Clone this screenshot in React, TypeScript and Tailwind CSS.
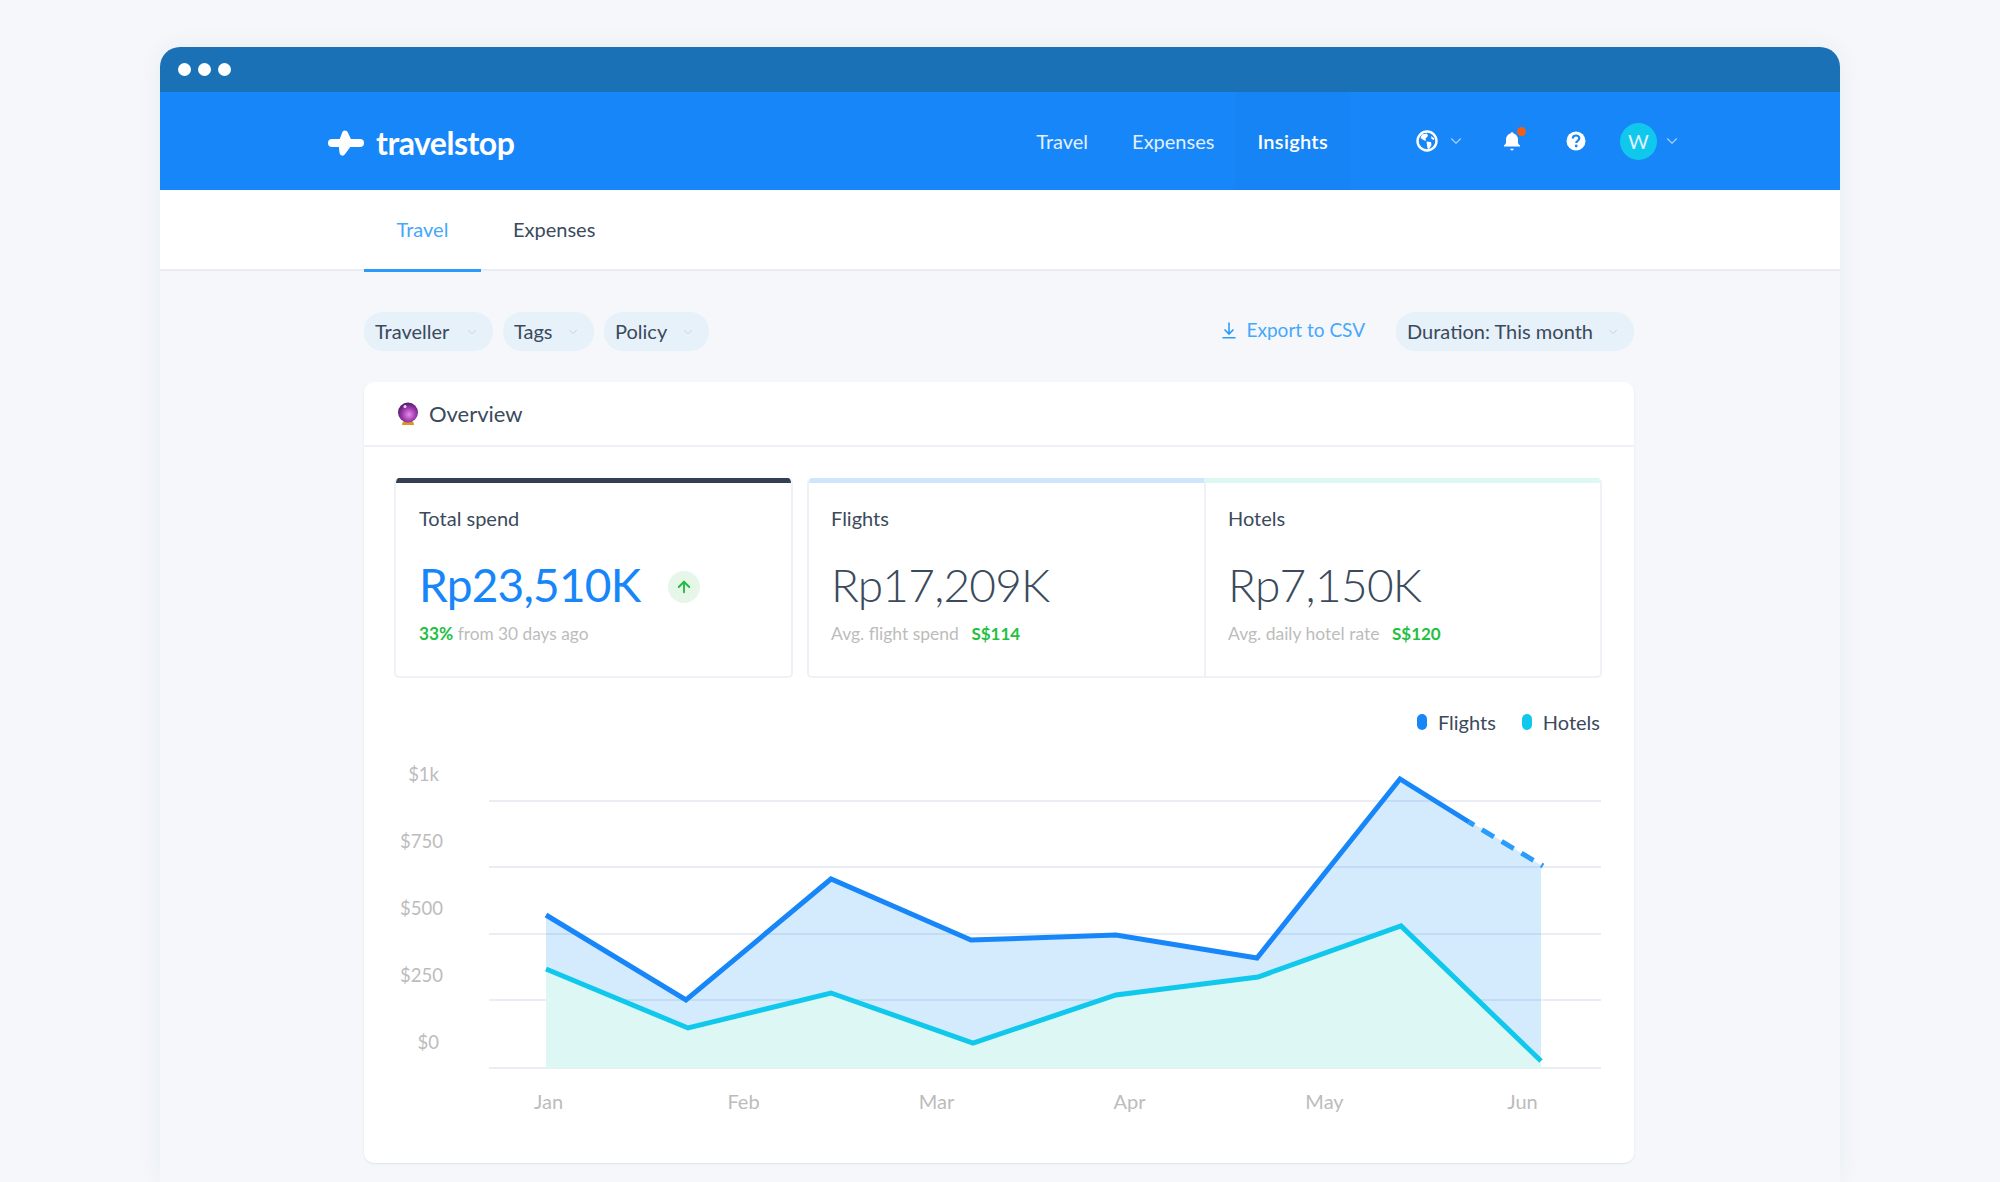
import { ArrowUp, ChevronDown } from "lucide-react";

const yLabels = ["$1k", "$750", "$500", "$250", "$0"];
const months = [
  { name: "Jan", width: 197 },
  { name: "Feb", width: 193 },
  { name: "Mar", width: 193 },
  { name: "Apr", width: 193 },
  { name: "May", width: 197 },
  { name: "Jun", width: 199 },
];

function FilterPill({ label, className }: { label: string; className: string }) {
  return (
    <div className={`flex h-[39px] items-center justify-between rounded-[19px] bg-[#e6f1fa] pl-[11px] pr-[14px] text-[20px] text-[#3b4a5c] ${className}`}>
      <span className="mb-[2px]">{label}</span>
      <ChevronDown size={14} strokeWidth={1.5} className="text-[#c3ced8]" />
    </div>
  );
}

function PlaneLogo() {
  return (
    <svg width="36" height="30" viewBox="0 0 36 30" fill="white" stroke="white" strokeLinecap="round" strokeLinejoin="round" className="mt-[3px]">
      <path d="M4 15H32" strokeWidth="8" />
      <path d="M17 5.500 21.500 15 14.500 24.500 13.500 15Z" strokeWidth="6" />
    </svg>
  );
}

function GlobeIcon() {
  return (
    <svg width="22" height="22" viewBox="0 0 22 22">
      <circle cx="11" cy="11" r="9.500" fill="none" stroke="white" strokeWidth="2.400" />
      <path d="M6 4.500 11 3.500 12 6 9.500 8.500 10 11 7.500 10 4.500 8Z" fill="white" />
      <path d="M10.500 11.500 15 12 15.500 15 13 19 11.500 18.500 11 15Z" fill="white" />
      <path d="M15 6 18.500 8.500 18 10 15.500 9Z" fill="white" />
    </svg>
  );
}

function BellIcon() {
  return (
    <div className="relative h-[22px] w-[22px]">
      <svg width="22" height="22" viewBox="0 0 22 22" fill="white">
        <path d="M10 2.200a1.300 1.300 0 0 1 1.500 1.200c2.900.7 4.500 3 4.500 6v3.200c0 1 .8 2 2 3v1H2v-1c1.200-1 2-2 2-3V9.400c0-3 1.600-5.300 4.500-6a1.400 1.400 0 0 1 1.500-1.200Z" />
        <path d="M8.200 18.800h3.600a1.800 1.800 0 0 1-3.600 0Z" />
      </svg>
      <span className="absolute right-[-2px] top-[-3px] h-[9px] w-[9px] rounded-full bg-[#ef5f17]" />
    </div>
  );
}

function HelpIcon() {
  return (
    <svg width="20" height="20" viewBox="0 0 20 20">
      <circle cx="10" cy="10" r="9.500" fill="white" />
      <path d="M6.800 7.600c0-2 1.500-3.100 3.300-3.100s3.200 1.100 3.200 2.800c0 2.500-3.100 2.400-3.100 4.600" fill="none" stroke="#1786f9" strokeWidth="2.200" />
      <circle cx="10.200" cy="15" r="1.400" fill="#1786f9" />
    </svg>
  );
}

function CrystalBall() {
  return (
    <svg width="22" height="24" viewBox="0 0 22 24">
      <defs>
        <radialGradient id="ball" cx="55%" cy="60%" r="60%">
          <stop offset="0%" stopColor="#e58be8" />
          <stop offset="55%" stopColor="#a13bb0" />
          <stop offset="100%" stopColor="#4d1a63" />
        </radialGradient>
      </defs>
      <path d="M5 23c0-3 2-5 6-5s6 2 6 5Z" fill="#d99a24" />
      <circle cx="11" cy="10.500" r="10" fill="url(#ball)" />
      <circle cx="8" cy="4.500" r="1.500" fill="#f2d6f5" />
    </svg>
  );
}

function DownloadIcon() {
  return (
    <svg width="14" height="17" viewBox="0 0 14 17" fill="none" stroke="#2a9dfb" strokeWidth="1.600">
      <path d="M7 0.500V12M2.500 7.500 7 12l4.500-4.500M0.500 15.800h13" />
    </svg>
  );
}

function AreaChart() {
  const blue = "546,915 686,1000 831,879 971,940 1116,935 1257,958 1400,779 1469,822";
  const cyan = "546,969 688,1028 831,993 973,1043 1116,995 1258,977 1401,926 1541,1061";
  return (
    <svg width="1113" height="300" viewBox="489 775 1113 300" className="block" fill="none">
      {[801, 867, 934, 1000, 1068].map((y) => (
        <line key={y} x1="489" x2="1601" y1={y} y2={y} stroke="#eaedf4" strokeWidth="2" />
      ))}
      <polygon points="546,915 686,1000 831,879 971,940 1116,935 1257,958 1400,779 1541,865 1541,1068 546,1068" fill="#2a9dfb" fillOpacity="0.2" />
      <polygon points="546,969 688,1028 831,993 973,1043 1116,995 1258,977 1401,926 1541,1061 1541,1068 546,1068" fill="#ddf8f4" fillOpacity="0.96" />
      <polyline points={blue} stroke="#1786f9" strokeWidth="5" />
      <line x1="1469" y1="822" x2="1543" y2="866" stroke="#2a9dfb" strokeWidth="5" strokeDasharray="6 9 14 9 14 9 14 9 7 20" />
      <polyline points={cyan} stroke="#10c8ec" strokeWidth="5" />
    </svg>
  );
}

export default function App() {
  return (
    <div className="h-[1182px] overflow-hidden bg-[#f5f7fb] px-[160px] pt-[47px] font-[Lato,sans-serif]">
      <div className="h-[1135px] rounded-t-[20px] bg-[#f5f7fb] shadow-[0_0_24px_rgba(40,60,90,0.06)]">
        <div className="flex h-[45px] items-center gap-[7px] rounded-t-[20px] bg-[#1a71b5] pl-[18px]">
          <span className="h-[13px] w-[13px] rounded-full bg-white" />
          <span className="h-[13px] w-[13px] rounded-full bg-white" />
          <span className="h-[13px] w-[13px] rounded-full bg-white" />
        </div>

        <header className="flex h-[98px] items-center bg-[#1786f9] pl-[168px] pr-[160px]">
          <div className="flex items-center gap-[12px]">
            <PlaneLogo />
            <span className="mt-[3px] text-[32px] font-bold leading-none tracking-[-0.5px] text-white">travelstop</span>
          </div>
          <nav className="ml-[522px] flex h-full items-center text-[20px] text-[#e2f0ff]">
            <span className="mr-[44px]">Travel</span>
            <span className="mr-[21px]">Expenses</span>
            <span className="flex h-full items-center bg-[#1784f5] px-[22px] font-semibold tracking-[0.3px] text-white">Insights</span>
          </nav>
          <div className="ml-[66px] flex items-center">
            <GlobeIcon />
            <ChevronDown size={18} strokeWidth={1.5} className="ml-[9px] text-[#a9d0f7]" />
            <div className="ml-[37px]"><BellIcon /></div>
            <div className="ml-[42px]"><HelpIcon /></div>
            <div className="ml-[34px] flex h-[37px] w-[37px] items-center justify-center rounded-full bg-[#10c8ec] text-[20px] text-[#e2f0ff]">W</div>
            <ChevronDown size={18} strokeWidth={1.5} className="ml-[6px] text-[#a9d0f7]" />
          </div>
        </header>

        <div className="flex h-[81px] border-b-2 border-[#e9ecf1] bg-white pl-[204px]">
          <div className="relative flex w-[117px] items-center justify-center pb-[2px] text-[20px] text-[#45a8fb]">
            Travel
            <span className="absolute bottom-[-3px] left-0 right-0 h-[3px] bg-[#2a9dfb]" />
          </div>
          <div className="ml-[32px] flex items-center pb-[2px] text-[20px] text-[#3b4a5c]">Expenses</div>
        </div>

        <main className="ml-[204px] w-[1270px]">
          <div className="mt-[41px] flex items-center">
            <FilterPill label="Traveller" className="w-[129px]" />
            <FilterPill label="Tags" className="ml-[10px] w-[91px]" />
            <FilterPill label="Policy" className="ml-[10px] w-[105px]" />
            <div className="ml-auto mb-[2px] flex items-center gap-[11px] text-[19px] text-[#45a8fb]">
              <DownloadIcon />
              <span>Export to CSV</span>
            </div>
            <FilterPill label="Duration: This month" className="ml-[31px] w-[238px]" />
          </div>

          <section className="mt-[31px] h-[781px] rounded-[10px] bg-white shadow-[0_1px_2px_rgba(40,60,90,0.1)]">
            <div className="flex h-[65px] items-center gap-[10px] border-b-2 border-[#eef1f5] pl-[33px] text-[22px] text-[#3b4a5c]">
              <CrystalBall />
              <span>Overview</span>
            </div>

            <div className="ml-[30px] mt-[31px] flex w-[1208px]">
              <div className="h-[200px] w-[399px] overflow-hidden rounded-[5px] border-2 border-t-0 border-[#eef1f5]">
                <div className="mx-[-2px] h-[5px] bg-[#333f52]" />
                <div className="pl-[23px] pt-[21px]">
                  <p className="text-[20px] leading-[28px] text-[#3b4a5c]">Total spend</p>
                  <div className="mt-[24px] flex items-center">
                    <span className="text-[46px] leading-[58px] tracking-[-0.8px] text-[#1786f9]">Rp23,510K</span>
                    <span className="ml-[28px] mt-[4px] flex h-[32px] w-[32px] items-center justify-center rounded-full bg-[#e6f6e8] text-[#1fbb3f]">
                      <ArrowUp size={18} strokeWidth={2.5} />
                    </span>
                  </div>
                  <p className="mt-[8px] text-[17.300px] leading-[24px] text-[#bcbcbc]">
                    <span className="font-bold text-[#22c03f]">33%</span> from 30 days ago
                  </p>
                </div>
              </div>

              <div className="ml-[14px] flex h-[200px] w-[795px] overflow-hidden rounded-[5px] border-2 border-t-0 border-[#eef1f5]">
                <div className="w-[397px] border-r-2 border-[#eef1f5]">
                  <div className="mx-[-2px] h-[5px] bg-[#cfe5fc]" />
                  <div className="pl-[22px] pt-[21px]">
                    <p className="text-[20px] leading-[28px] text-[#3b4a5c]">Flights</p>
                    <p className="mt-[24px] text-[46px] font-light leading-[58px] tracking-[-0.8px] text-[#3b4a5c]">Rp17,209K</p>
                    <p className="mt-[8px] text-[17.500px] leading-[24px] text-[#bcbcbc]">
                      Avg. flight spend <span className="ml-[8px] text-[17px] font-bold text-[#22c03f]">S$114</span>
                    </p>
                  </div>
                </div>
                <div className="flex-1">
                  <div className="mx-[-2px] h-[5px] bg-[#dcf8f3]" />
                  <div className="pl-[22px] pt-[21px]">
                    <p className="text-[20px] leading-[28px] text-[#3b4a5c]">Hotels</p>
                    <p className="mt-[24px] text-[46px] font-light leading-[58px] tracking-[-0.7px] text-[#3b4a5c]">Rp7,150K</p>
                    <p className="mt-[8px] text-[17.500px] leading-[24px] text-[#bcbcbc]">
                      Avg. daily hotel rate <span className="ml-[8px] text-[17px] font-bold text-[#22c03f]">S$120</span>
                    </p>
                  </div>
                </div>
              </div>
            </div>

            <div className="mr-[34px] mt-[31px] flex justify-end text-[20px] leading-[26px] text-[#3b4a5c]">
              <div className="flex items-center gap-[11px]">
                <span className="h-[16px] w-[10px] rounded-full bg-[#1786f9]" />
                Flights
              </div>
              <div className="ml-[26px] flex items-center gap-[11px]">
                <span className="h-[16px] w-[10px] rounded-full bg-[#10c8ec]" />
                Hotels
              </div>
            </div>

            <div className="ml-[36px] mt-[40px] flex">
              <div className="mt-[-14px] w-[39px] text-right text-[18.500px] leading-[26px] text-[#bcbcbc]">
                {yLabels.map((l) => (
                  <div key={l} className="mb-[41px]">{l}</div>
                ))}
              </div>
              <div className="ml-[50px]">
                <AreaChart />
                <div className="ml-[-39px] mt-[14px] flex text-center text-[20px] leading-[24px] text-[#bcbcbc]">
                  {months.map((m) => (
                    <div key={m.name} style={{ width: m.width }}>{m.name}</div>
                  ))}
                </div>
              </div>
            </div>
          </section>
        </main>
      </div>
    </div>
  );
}
